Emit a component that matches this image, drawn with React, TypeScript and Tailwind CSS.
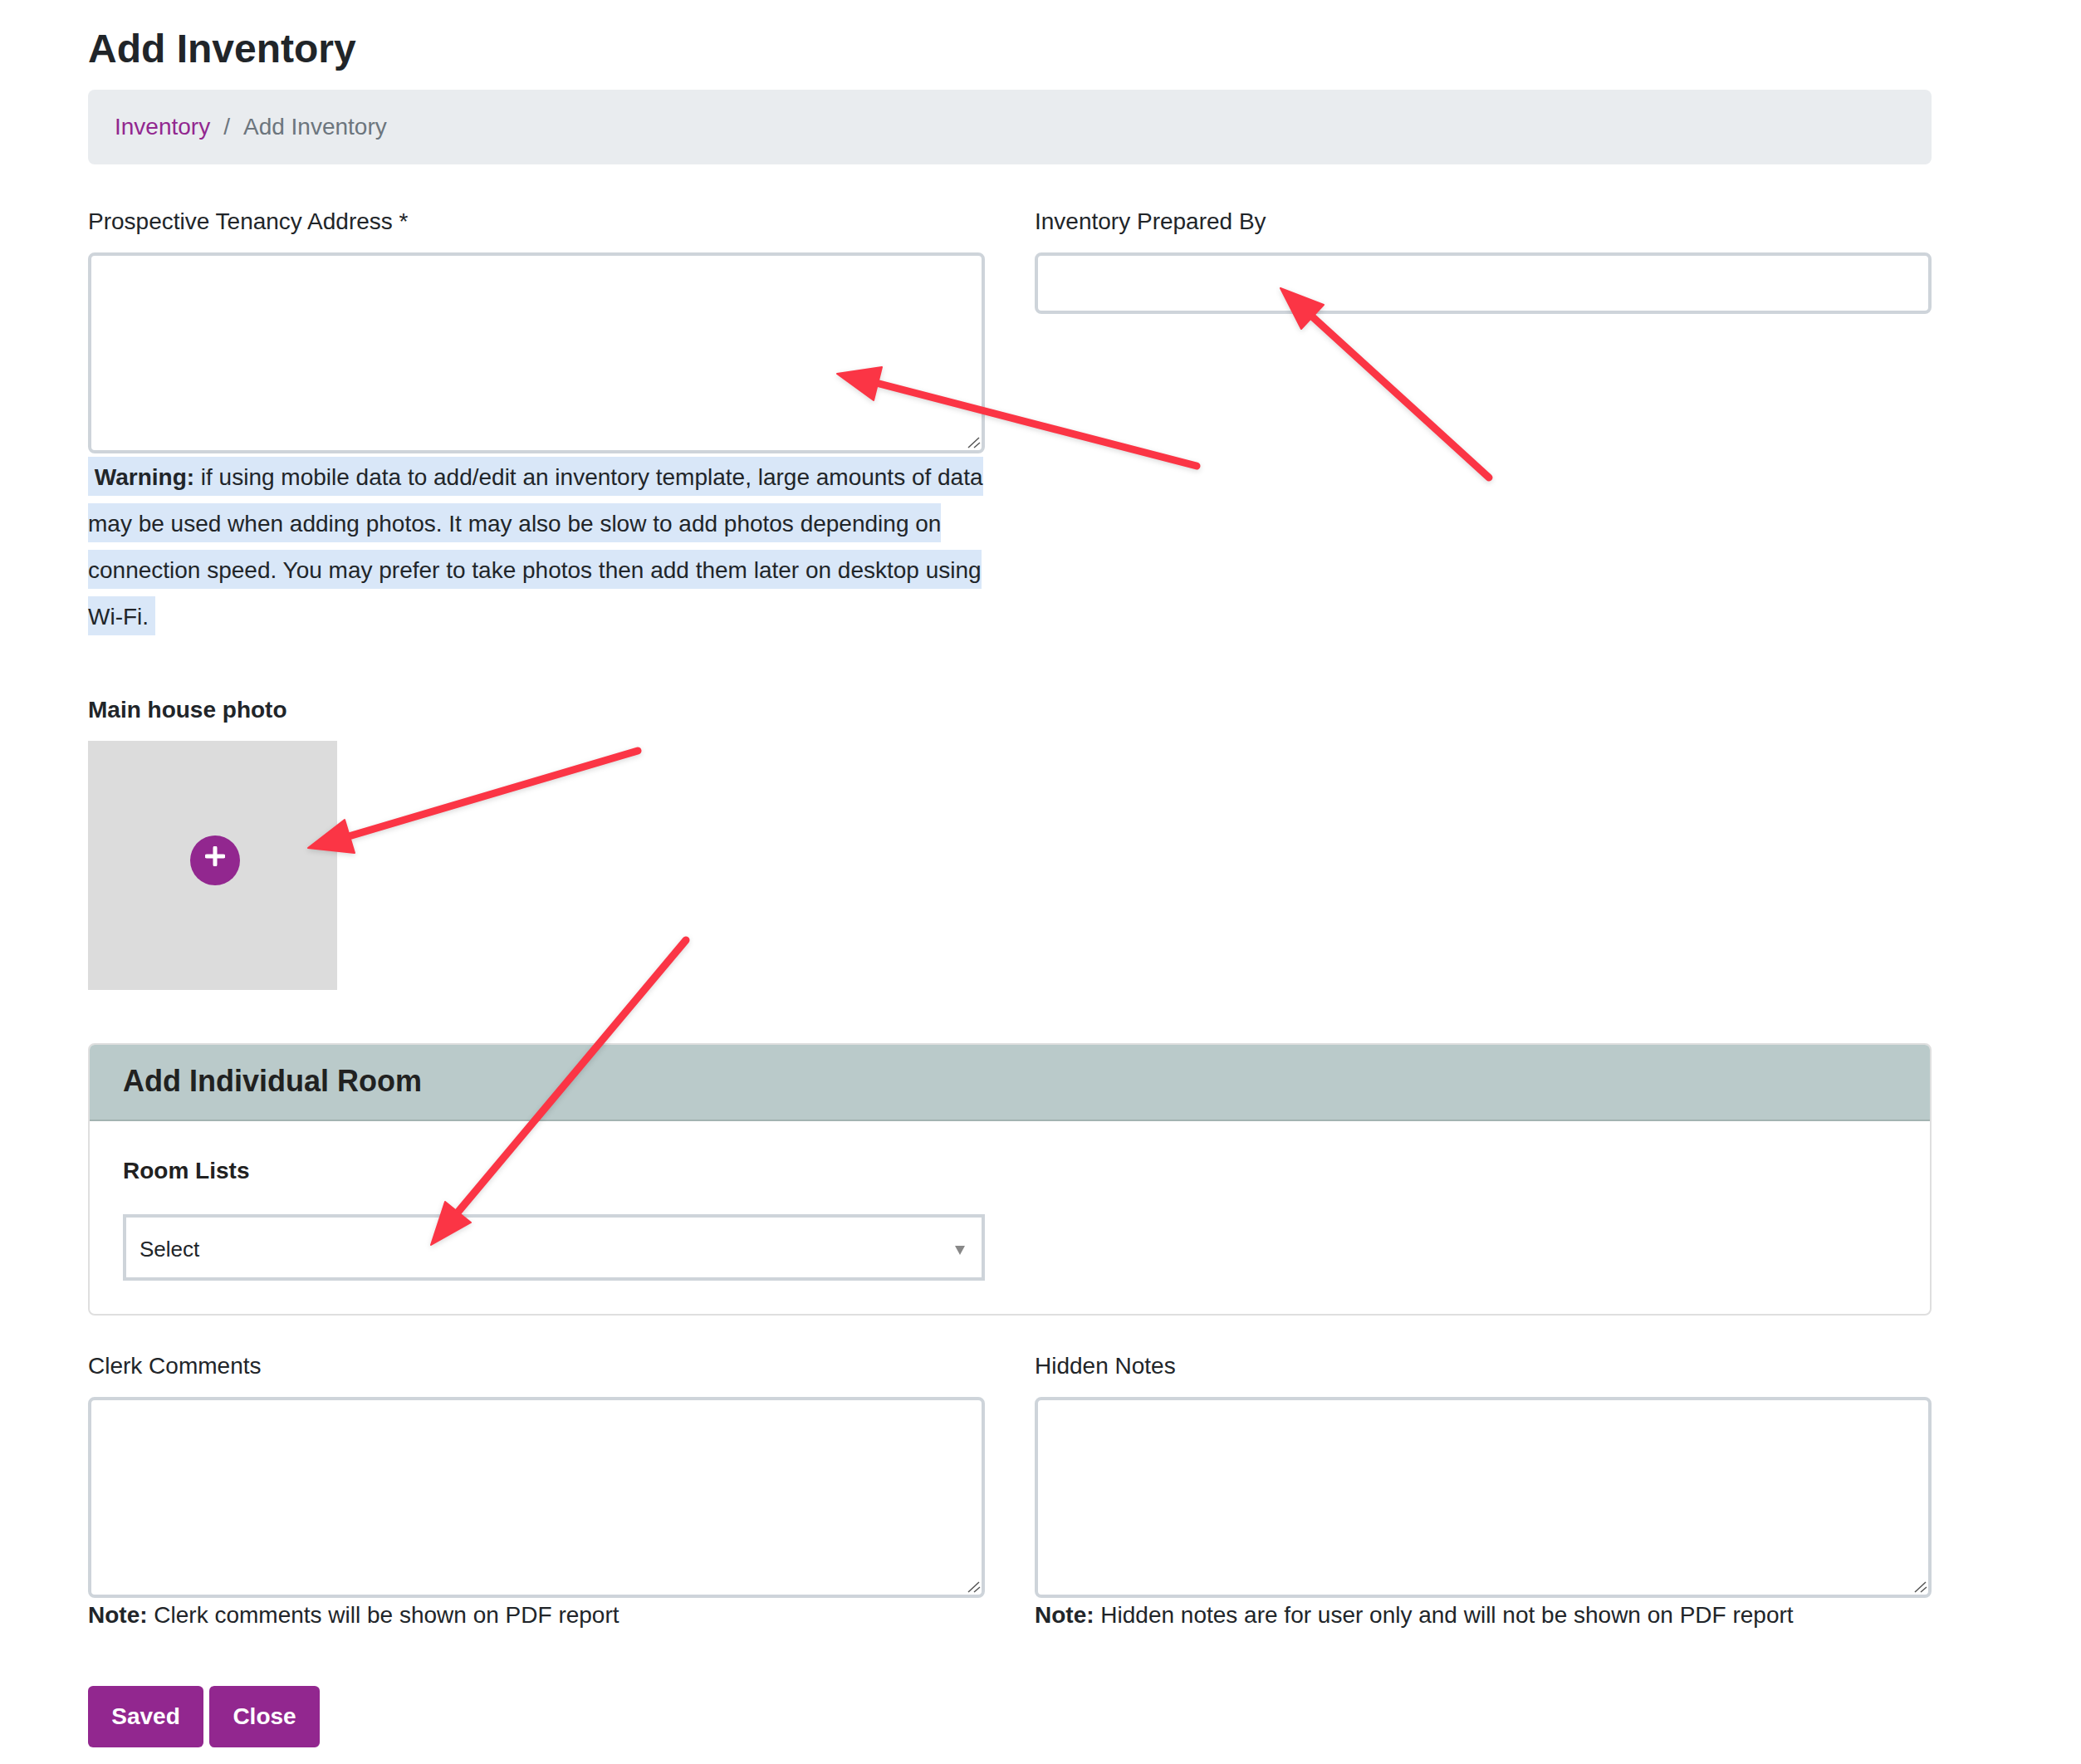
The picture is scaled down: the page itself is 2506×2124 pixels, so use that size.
import React from 'react';

type ArrowProps = {
  tail: [number, number];
  neck: [number, number];
  head: string;
};

function Arrow({ tail, neck, head }: ArrowProps) {
  return (
    <g>
      <line x1={tail[0]} y1={tail[1]} x2={neck[0]} y2={neck[1]} stroke="#fb3545" strokeWidth={9} strokeLinecap="round" />
      <polygon points={head} fill="#fb3545" stroke="#fb3545" strokeWidth={2} strokeLinejoin="round" />
    </g>
  );
}

function BigTextarea() {
  return (
    <div className="relative">
      <textarea className="block h-[242px] w-full resize-none rounded-[8px] border-[4px] border-[#ced4da] bg-white" />
      <svg width="16" height="14" viewBox="0 0 16 14" className="absolute bottom-[6px] right-[5px]">
        <path d="M1 13 L14 1 M8 13 L15 7" stroke="#555" strokeWidth="1.5" fill="none" />
      </svg>
    </div>
  );
}

function Note({ label, text }: { label: string; text: string }) {
  return (
    <p className="text-[28px] leading-[42px] text-[#212529]">
      <strong className="font-bold">{label}</strong> {text}
    </p>
  );
}

export default function App() {
  return (
    <div className="relative h-[2124px] w-[2506px] overflow-hidden bg-white font-['Liberation_Sans',Arial,sans-serif] text-[#212529]">
      <div className="w-[2326px] pl-[106px] pt-[30px]">
        <h1 className="text-[48px] leading-[58px] font-bold">Add Inventory</h1>

        {/* Breadcrumb */}
        <div className="mt-[20px] flex h-[90px] items-center rounded-[8px] bg-[#e9ecef] px-[32px] text-[28px]">
          <span className="text-[#92278f]">Inventory</span>
          <span className="px-[16px] text-[#6c757d]">/</span>
          <span className="text-[#6c757d]">Add Inventory</span>
        </div>

        {/* Top fields */}
        <div className="mt-[48px] grid grid-cols-2 gap-x-[60px]">
          <div>
            <label className="mb-[16px] block text-[28px] leading-[42px]">Prospective Tenancy Address *</label>
            <BigTextarea />
            <p className="mt-[1px] text-[28px] leading-[56px]">
              <span className="bg-[#d9e7f8] pb-[7px] pt-[9px]">
                {'\u00a0'}
                <strong className="font-bold">Warning:</strong> if using mobile data to add/edit an inventory template, large amounts of data may be used when adding photos. It may also be slow to add photos depending on connection speed. You may prefer to take photos then add them later on desktop using Wi-Fi.{'\u00a0'}
              </span>
            </p>
          </div>
          <div>
            <label className="mb-[16px] block text-[28px] leading-[42px]">Inventory Prepared By</label>
            <input type="text" className="block h-[74px] w-full rounded-[8px] border-[4px] border-[#ced4da] bg-white" />
          </div>
        </div>

        {/* Main photo */}
        <div className="mt-[63px]">
          <div className="mb-[16px] text-[28px] leading-[42px] font-bold">Main house photo</div>
          <div className="relative h-[300px] w-[300px] bg-[#dcdcdc]">
            <div className="absolute left-[123px] top-[114px] flex h-[60px] w-[60px] items-center justify-center rounded-full bg-[#92278f]">
              <svg width="24" height="24" viewBox="0 0 24 24" className="-translate-y-[5px]">
                <path d="M12 2v20M2 12h20" stroke="#fff" strokeWidth="5" strokeLinecap="round" />
              </svg>
            </div>
          </div>
        </div>

        {/* Add Individual Room */}
        <div className="mt-[64px] h-[328px] overflow-hidden rounded-[8px] border-[2px] border-[#dfdfdf]">
          <div className="flex h-[92px] items-center border-b-[2px] border-[#a3b3b1] bg-[#bacaca] px-[40px] pb-[2px] text-[36px] font-bold text-[#212121]">
            Add Individual Room
          </div>
          <div className="px-[40px] pt-[39px]">
            <div className="mb-[31px] text-[28px] leading-[42px] font-bold text-[#212121]">Room Lists</div>
            <div className="relative w-[1038px]">
              <select className="block h-[80px] w-full appearance-none rounded-none border-[4px] border-[#ced4da] bg-white pl-[16px] pt-[4px] text-[26px] text-[#212529]">
                <option>Select</option>
              </select>
              <svg width="12" height="11" viewBox="0 0 12 11" className="absolute right-[24px] top-[38px]">
                <path d="M0 0h12L6 11z" fill="#888" />
              </svg>
            </div>
          </div>
        </div>

        {/* Comments */}
        <div className="mt-[40px] grid grid-cols-2 gap-x-[60px]">
          <div>
            <label className="mb-[16px] block text-[28px] leading-[42px]">Clerk Comments</label>
            <BigTextarea />
            <Note label="Note:" text="Clerk comments will be shown on PDF report" />
          </div>
          <div>
            <label className="mb-[16px] block text-[28px] leading-[42px]">Hidden Notes</label>
            <BigTextarea />
            <Note label="Note:" text="Hidden notes are for user only and will not be shown on PDF report" />
          </div>
        </div>

        {/* Buttons */}
        <div className="mt-[64px] flex gap-[7px]">
          <button className="h-[74px] w-[139px] rounded-[6px] bg-[#92278f] text-[28px] font-bold text-white">Saved</button>
          <button className="h-[74px] w-[133px] rounded-[6px] bg-[#92278f] text-[28px] font-bold text-white">Close</button>
        </div>
      </div>

      {/* Annotation arrows */}
      <svg className="pointer-events-none absolute left-0 top-0 drop-shadow-[0_2px_3px_rgba(0,0,0,0.15)]" width="2506" height="2124">
        <Arrow tail={[1441, 561]} neck={[1055, 461]} head="1008,450 1062,442 1052,482" />
        <Arrow tail={[1793, 575]} neck={[1580, 381]} head="1542,347 1594,367 1567,396" />
        <Arrow tail={[768, 904]} neck={[420, 1007]} head="371,1021 415,987 427,1027" />
        <Arrow tail={[826, 1132]} neck={[551, 1460]} head="519,1499 536,1447 567,1472" />
      </svg>
    </div>
  );
}
